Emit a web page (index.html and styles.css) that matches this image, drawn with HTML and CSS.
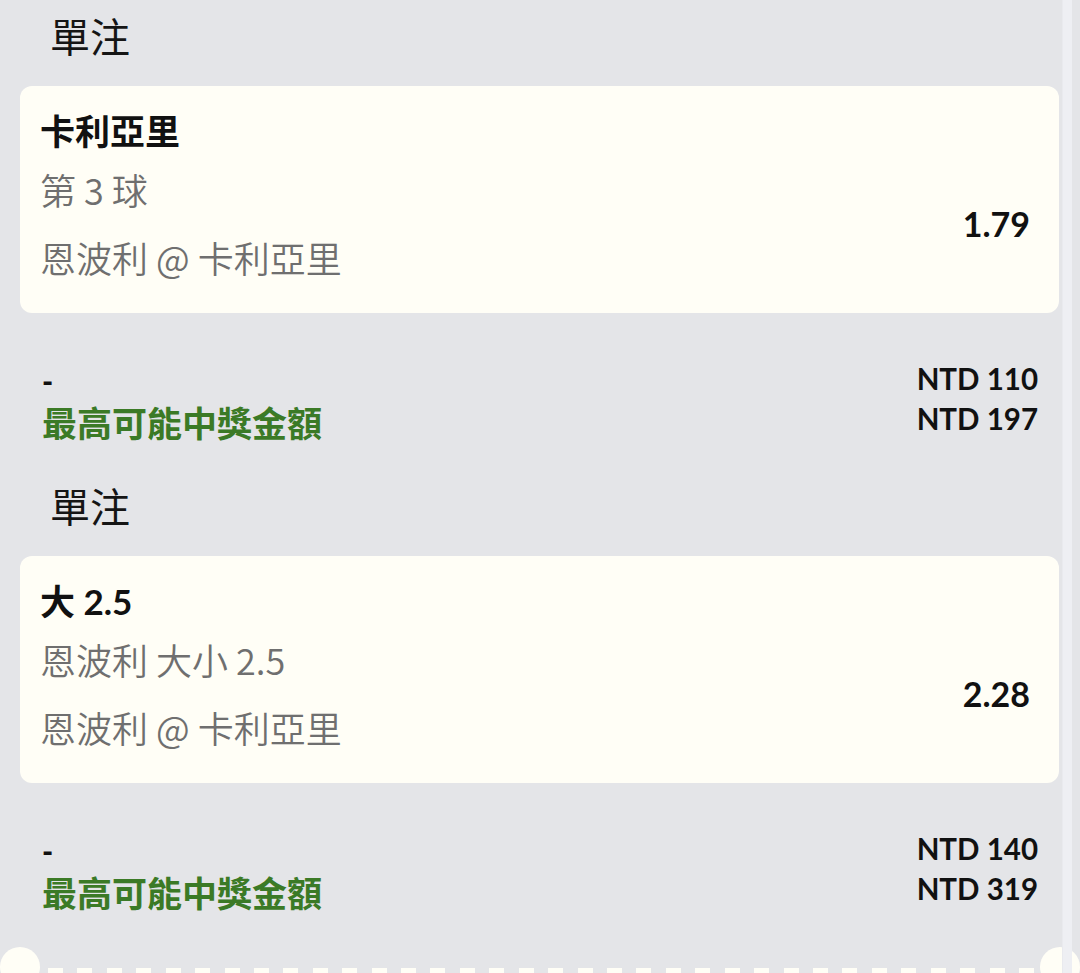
FILE: index.html
```html
<!DOCTYPE html>
<html lang="zh-Hant">
<head>
<meta charset="utf-8">
<title>單注</title>
<link rel="stylesheet" href="styles.css">
</head>
<body>
<div class="page">
  <section class="bet">
    <div class="bet-head">單注</div>
    <div class="card">
      <div class="card-info">
        <div class="sel">卡利亞里</div>
        <div class="market">第 3 球</div>
        <div class="match">恩波利 @ 卡利亞里</div>
      </div>
      <div class="odds">1.79</div>
    </div>
    <div class="summary">
      <div class="sum-left">
        <div class="dash">-</div>
        <div class="payout-label">最高可能中獎金額</div>
      </div>
      <div class="sum-right">
        <div class="amt">NTD 110</div>
        <div class="amt">NTD 197</div>
      </div>
    </div>
  </section>
  <section class="bet">
    <div class="bet-head">單注</div>
    <div class="card">
      <div class="card-info">
        <div class="sel">大 2.5</div>
        <div class="market">恩波利 大小 2.5</div>
        <div class="match">恩波利 @ 卡利亞里</div>
      </div>
      <div class="odds">2.28</div>
    </div>
    <div class="summary">
      <div class="sum-left">
        <div class="dash">-</div>
        <div class="payout-label">最高可能中獎金額</div>
      </div>
      <div class="sum-right">
        <div class="amt">NTD 140</div>
        <div class="amt">NTD 319</div>
      </div>
    </div>
  </section>
  <div class="ticket-edge">
    <span class="perf"></span><span class="perf"></span><span class="perf"></span><span class="perf"></span><span class="perf"></span><span class="perf"></span><span class="perf"></span><span class="perf"></span><span class="perf"></span><span class="perf"></span><span class="perf"></span><span class="perf"></span><span class="perf"></span><span class="perf"></span><span class="perf"></span><span class="perf"></span><span class="perf"></span><span class="perf"></span><span class="perf"></span><span class="perf"></span><span class="perf"></span><span class="perf"></span><span class="perf"></span><span class="perf"></span><span class="perf"></span><span class="perf"></span><span class="perf"></span><span class="perf"></span><span class="perf"></span><span class="perf"></span><span class="perf"></span><span class="perf"></span><span class="perf"></span><span class="perf"></span>
  </div>
  <div class="scrollbar"></div>
</div>
</body>
</html>
```

FILE: styles.css
```css
html, body {
  margin: 0;
  padding: 0;
  background: #e4e5e8;
}
body {
  font-family: "Lato", "Noto Sans CJK TC", sans-serif;
  color: #111;
  overflow: hidden;
}
.page {
  position: relative;
  width: 1080px;
  height: 973px;
  overflow: hidden;
}
.bet {
  height: 470px;
  display: flex;
  flex-direction: column;
}
.bet-head {
  height: 86px;
  box-sizing: border-box;
  padding: 10px 0 0 50px;
  font-family: "Noto Sans CJK TC", sans-serif;
  font-size: 40px;
  line-height: 50px;
  color: #151515;
}
.card {
  margin: 0 21px 0 20px;
  height: 227px;
  box-sizing: border-box;
  background: #fffef6;
  border-radius: 12px;
  padding: 21px 29px 0 20px;
  display: flex;
  justify-content: space-between;
}
.sel {
  font-family: "Lato", "Noto Sans CJK TC", sans-serif;
  font-weight: 700;
  font-size: 35px;
  line-height: 48px;
  color: #111;
}
.market, .match {
  font-family: "Noto Sans CJK TC", sans-serif;
  font-weight: 350;
  font-size: 36px;
  line-height: 48px;
  color: #6f6f6f;
}
.market { margin-top: 10px; }
.match { margin-top: 20px; }
.odds {
  align-self: center;
  margin-top: 26px;
  font-weight: 700;
  font-size: 34px;
  color: #111;
}
.summary {
  display: flex;
  justify-content: space-between;
  padding: 0 42px 0 42px;
}
.sum-left { padding-top: 48px; }
.dash {
  font-weight: 900;
  font-size: 30px;
  line-height: 40px;
  color: #111;
}
.payout-label {
  margin-top: 1px;
  font-family: "Noto Sans CJK TC", sans-serif;
  font-weight: 700;
  font-size: 35px;
  line-height: 40px;
  color: #3b7a26;
}
.sum-right {
  padding-top: 46px;
  text-align: right;
}
.amt {
  font-weight: 700;
  font-size: 29.5px;
  line-height: 40px;
  color: #111;
}
.ticket-edge {
  position: relative;
  height: 33px;
  display: flex;
  justify-content: space-between;
  align-items: flex-end;
  padding: 0 46px 0 48px;
}
.ticket-edge::before,
.ticket-edge::after {
  content: "";
  position: absolute;
  top: 7px;
  width: 40px;
  height: 40px;
  border-radius: 50%;
  background: #fffef6;
}
.ticket-edge::before { left: 0; }
.ticket-edge::after { right: 0; }
.perf {
  width: 15px;
  height: 5px;
  background: #fffef6;
}
.scrollbar {
  position: absolute;
  top: 0;
  left: 1062px;
  width: 10px;
  height: 973px;
  background: #eeeff3;
  border-left: 1px solid #e9eaee;
  box-sizing: border-box;
}
```
